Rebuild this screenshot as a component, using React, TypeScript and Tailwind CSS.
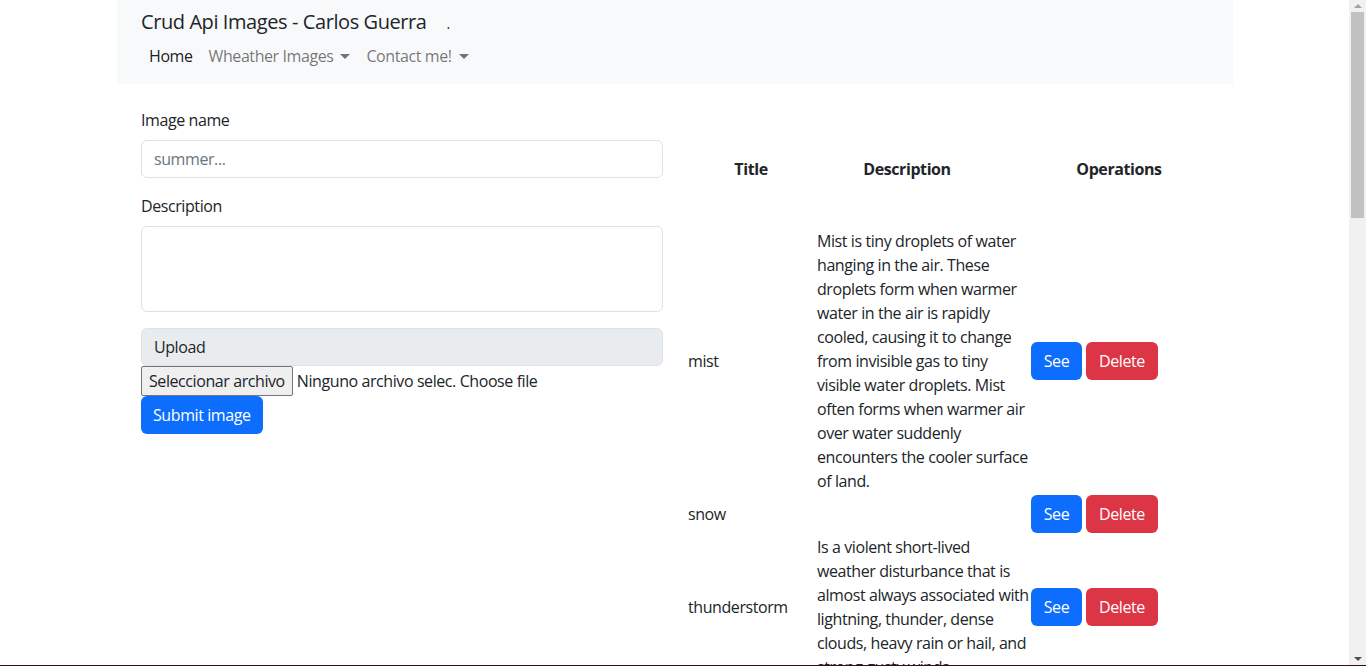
import React from "react";

const font = { fontFamily: '"Open Sans", "Noto Sans", sans-serif' };

function Caret() {
  return (
    <span className="ml-[7px] inline-block h-0 w-0 border-x-[5px] border-t-[5px] border-x-transparent border-t-[#6c757d] align-middle" />
  );
}

const mistLines = [
  "Mist is tiny droplets of water",
  "hanging in the air. These",
  "droplets form when warmer",
  "water in the air is rapidly",
  "cooled, causing it to change",
  "from invisible gas to tiny",
  "visible water droplets. Mist",
  "often forms when warmer air",
  "over water suddenly",
  "encounters the cooler surface",
  "of land.",
];

const stormLines = [
  "Is a violent short-lived",
  "weather disturbance that is",
  "almost always associated with",
  "lightning, thunder, dense",
  "clouds, heavy rain or hail, and",
  "strong gusty winds.",
];

function Ops() {
  return (
    <div className="flex gap-1 py-[2px]">
      <button className="h-[38px] w-[51px] rounded-[6px] bg-[#0d6efd] text-[16px] text-white">See</button>
      <button className="h-[38px] w-[72px] rounded-[6px] bg-[#dc3545] text-[16px] text-white">Delete</button>
    </div>
  );
}

function Row({ title, lines }: { title: string; lines: string[] }) {
  return (
    <div className="grid grid-cols-[129px_214px_179px] items-center">
      <div>{title}</div>
      <div>
        {lines.map((l, i) => (
          <div key={i} className="whitespace-nowrap">{l}</div>
        ))}
      </div>
      <Ops />
    </div>
  );
}

export default function App() {
  return (
    <div className="flex h-[666px] w-[1366px] flex-col overflow-hidden bg-white text-[16px] leading-[24px] tracking-[-0.026em] text-[#212529]" style={font}>
      <div className="flex h-[665px] overflow-hidden">
        <div className="flex-1 overflow-hidden">
          <div className="ml-[117px] w-[1116px]">
            <nav className="h-[84px] bg-[#f8f9fa] px-6">
              <div className="pt-[7px] text-[20px] leading-[30px] text-[#212529]">
                Crud Api Images - Carlos Guerra<span className="ml-[20px] text-[14px]">.</span>
              </div>
              <div className="mt-[5px] flex">
                <span className="px-2 text-[rgba(0,0,0,0.9)]">Home</span>
                <span className="flex items-center px-2 text-[rgba(0,0,0,0.55)]">
                  Wheather Images
                  <Caret />
                </span>
                <span className="flex items-center px-2 text-[rgba(0,0,0,0.55)]">
                  Contact me!
                  <Caret />
                </span>
              </div>
            </nav>
            <div className="flex gap-[25px] px-6 pt-6">
              <div className="w-[522px] shrink-0">
                <div>Image name</div>
                <div className="mt-2 flex h-[38px] items-center rounded-[6px] border border-[#dee2e6] px-3 text-[#6c757d]">
                  summer...
                </div>
                <div className="mt-4">Description</div>
                <div className="mt-2 h-[86px] rounded-[6px] border border-[#dee2e6]" />
                <div className="mt-4 flex h-[38px] items-center rounded-[6px] border border-[#dee2e6] bg-[#e9ecef] px-3">
                  Upload
                </div>
                <div className="flex h-[30px] items-center">
                  <span className="flex h-[30px] items-center rounded-[2px] border border-[#767676] bg-[#efefef] px-[7px] text-[#212529]">
                    Seleccionar archivo
                  </span>
                  <span className="ml-1">Ninguno archivo selec. Choose file</span>
                </div>
                <button className="h-[38px] rounded-[6px] bg-[#0d6efd] px-3 text-white">Submit image</button>
              </div>
              <div className="w-[522px] shrink-0">
                <div className="flex h-[121px] items-center font-bold">
                  <div className="w-[126px] shrink-0 text-center">Title</div>
                  <div className="w-[186px] shrink-0 text-center">Description</div>
                  <div className="w-[238px] shrink-0 text-center">Operations</div>
                </div>
                <Row title="mist" lines={mistLines} />
                <Row title="snow" lines={[]} />
                <Row title="thunderstorm" lines={stormLines} />
              </div>
            </div>
          </div>
        </div>
        <div className="flex w-[17px] flex-col items-center bg-[#f1f1f1]">
          <div className="mt-[4px] h-0 w-0 border-x-[4px] border-b-[4px] border-x-transparent border-b-[#a3a3a3]" />
          <div className="mt-[4px] h-[206px] w-[13px] bg-[#c1c1c1]" />
          <div className="flex-1" />
          <div className="mb-[4px] h-0 w-0 border-x-[4px] border-t-[4px] border-x-transparent border-t-[#505050]" />
        </div>
      </div>
      <div className="h-px bg-[#3b0a12]" />
    </div>
  );
}
